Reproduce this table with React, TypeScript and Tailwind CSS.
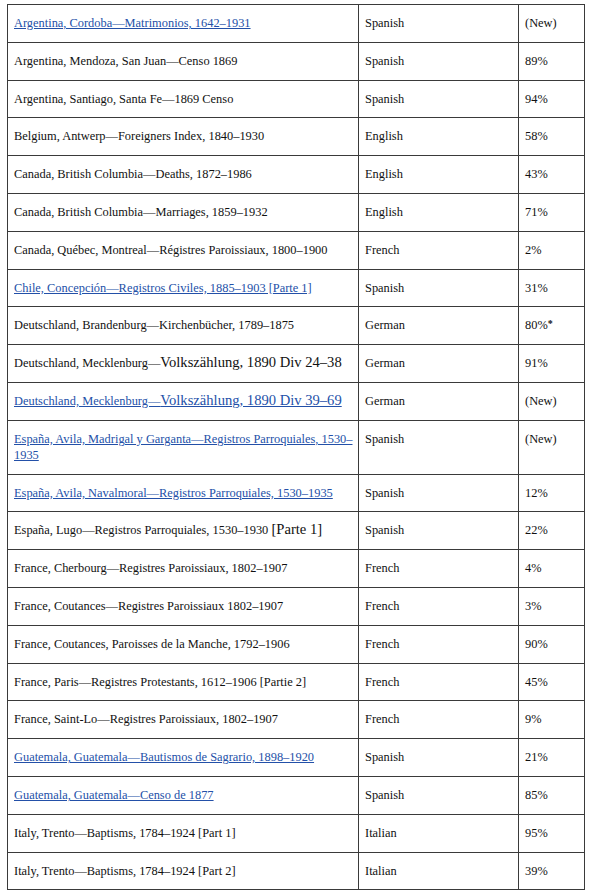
import React from 'react';

type Row = {
  title: React.ReactNode;
  link?: boolean;
  lang: string;
  pct: React.ReactNode;
};

const Big = ({ children }: { children: React.ReactNode }) => (
  <span className="text-[14.6px] leading-[10px]">{children}</span>
);

const rows: Row[] = [
  { title: 'Argentina, Cordoba—Matrimonios, 1642–1931', link: true, lang: 'Spanish', pct: '(New)' },
  { title: 'Argentina, Mendoza, San Juan—Censo 1869', lang: 'Spanish', pct: '89%' },
  { title: 'Argentina, Santiago, Santa Fe—1869 Censo', lang: 'Spanish', pct: '94%' },
  { title: 'Belgium, Antwerp—Foreigners Index, 1840–1930', lang: 'English', pct: '58%' },
  { title: 'Canada, British Columbia—Deaths, 1872–1986', lang: 'English', pct: '43%' },
  { title: 'Canada, British Columbia—Marriages, 1859–1932', lang: 'English', pct: '71%' },
  { title: 'Canada, Québec, Montreal—Régistres Paroissiaux, 1800–1900', lang: 'French', pct: '2%' },
  { title: 'Chile, Concepción—Registros Civiles, 1885–1903 [Parte 1]', link: true, lang: 'Spanish', pct: '31%' },
  { title: 'Deutschland, Brandenburg—Kirchenbücher, 1789–1875', lang: 'German', pct: <>80%<b className="text-[10px] leading-[10px] align-[2px]">*</b></> },
  { title: <>Deutschland, Mecklenburg—<Big>Volkszählung, 1890 Div 24–38</Big></>, lang: 'German', pct: '91%' },
  { title: <>Deutschland, Mecklenburg—<Big>Volkszählung, 1890 Div 39–69</Big></>, link: true, lang: 'German', pct: '(New)' },
  { title: 'España, Avila, Madrigal y Garganta—Registros Parroquiales, 1530–1935', link: true, lang: 'Spanish', pct: '(New)' },
  { title: 'España, Avila, Navalmoral—Registros Parroquiales, 1530–1935', link: true, lang: 'Spanish', pct: '12%' },
  { title: <>España, Lugo—Registros Parroquiales, 1530–1930 <Big>[Parte 1]</Big></>, lang: 'Spanish', pct: '22%' },
  { title: 'France, Cherbourg—Registres Paroissiaux, 1802–1907', lang: 'French', pct: '4%' },
  { title: 'France, Coutances—Registres Paroissiaux 1802–1907', lang: 'French', pct: '3%' },
  { title: 'France, Coutances, Paroisses de la Manche, 1792–1906', lang: 'French', pct: '90%' },
  { title: 'France, Paris—Registres Protestants, 1612–1906 [Partie 2]', lang: 'French', pct: '45%' },
  { title: 'France, Saint-Lo—Registres Paroissiaux, 1802–1907', lang: 'French', pct: '9%' },
  { title: 'Guatemala, Guatemala—Bautismos de Sagrario, 1898–1920', link: true, lang: 'Spanish', pct: '21%' },
  { title: 'Guatemala, Guatemala—Censo de 1877', link: true, lang: 'Spanish', pct: '85%' },
  { title: 'Italy, Trento—Baptisms, 1784–1924 [Part 1]', lang: 'Italian', pct: '95%' },
  { title: 'Italy, Trento—Baptisms, 1784–1924 [Part 2]', lang: 'Italian', pct: '39%' },
];

export default function App() {
  return (
    <div className="w-[590px] h-[890px] overflow-hidden bg-white pt-[4px] pl-[7px] font-['Liberation_Serif',serif] text-[12.4px] text-[#111]">
      <table className="w-[577px] table-fixed border-collapse">
        <colgroup>
          <col className="w-[351px]" />
          <col className="w-[160px]" />
          <col className="w-[66px]" />
        </colgroup>
        <tbody>
          {rows.map((r, i) => (
            <tr key={i}>
              <td className="border border-[#3a3a3a] align-top pl-[6px] pr-[2px] pt-[10px] pb-[10.8px] leading-[16px]">
                {r.link ? (
                  <a href="#" className="text-[#2350a8] underline underline-offset-[1px]">{r.title}</a>
                ) : (
                  r.title
                )}
              </td>
              <td className="border border-[#3a3a3a] align-top pl-[6px] pt-[10px] pb-[10.8px] leading-[16px]">{r.lang}</td>
              <td className="border border-[#3a3a3a] align-top pl-[6px] pt-[10px] pb-[10.8px] leading-[16px]">{r.pct}</td>
            </tr>
          ))}
        </tbody>
      </table>
    </div>
  );
}
